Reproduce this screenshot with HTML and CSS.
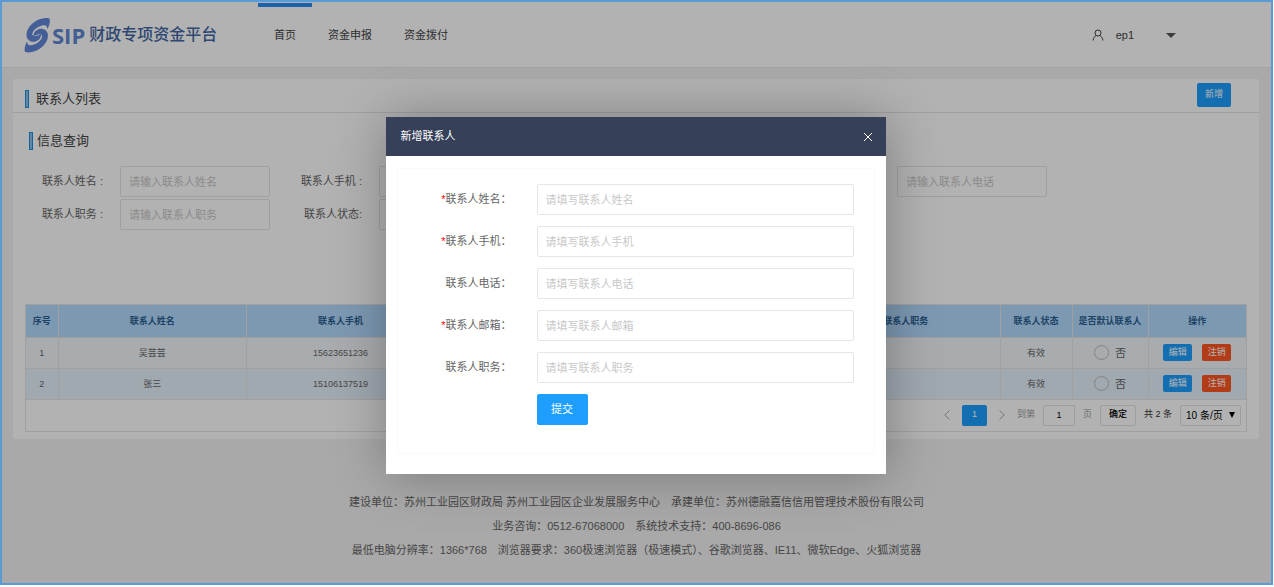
FILE: index.html
```html
<!DOCTYPE html>
<html lang="zh-CN">
<head>
<meta charset="utf-8">
<title>SIP 财政专项资金平台</title>
<link rel="stylesheet" href="styles.css">
</head>
<body>
<div class="frame">
  <header class="topbar">
    <a class="logo" href="#">
      <svg class="logo-mark" viewBox="0 0 28 36" aria-hidden="true">
        <path d="M25.500 1.500C20 0 13 2.500 8.500 6.500C4 10.500 2 15 2.700 19.500C3.300 23 6.500 25.300 10.500 24.800C14.500 24 17.500 20.500 17 17.500C15 17.500 13 19.500 10.500 19.300C8 19 8 16 9.500 14C12 10.500 17 8 20.500 8.200C22.800 8.500 23.500 10 23 12.500C25.500 9 26.500 4.500 25.500 1.500Z"/>
        <path transform="rotate(180 13.250 18.250)" d="M25.500 1.500C20 0 13 2.500 8.500 6.500C4 10.500 2 15 2.700 19.500C3.300 23 6.500 25.300 10.500 24.800C14.500 24 17.500 20.500 17 17.500C15 17.500 13 19.500 10.500 19.300C8 19 8 16 9.500 14C12 10.500 17 8 20.500 8.200C22.800 8.500 23.500 10 23 12.500C25.500 9 26.500 4.500 25.500 1.500Z"/>
        <path class="logo-cut" d="M9 18C9 14.500 13 11.300 18.500 10M17.500 18.500C17.500 22 13.500 25.200 8 26.500"/>
      </svg>
      <span class="logo-sip">SIP</span>
      <span class="logo-name">财政专项资金平台</span>
    </a>
    <nav class="nav">
      <a class="nav-item active" href="#">首页</a>
      <a class="nav-item" href="#">资金申报</a>
      <a class="nav-item" href="#">资金拨付</a>
    </nav>
    <button class="user" type="button">
      <svg class="user-icon" viewBox="0 0 12 12" aria-hidden="true"><circle cx="6" cy="4" r="3"/><path d="M1 11.500C1.300 8.500 3 7.200 4.300 6.600M7.700 6.600C9 7.200 10.700 8.500 11 11.500"/></svg>
      <span>ep1</span>
      <svg class="caret" viewBox="0 0 10 5" aria-hidden="true"><path d="M0 0H10L5 5Z"/></svg>
    </button>
  </header>

  <main class="card">
    <div class="card-head">
      <h1 class="title">联系人列表</h1>
      <button class="btn btn-add" type="button">新增</button>
    </div>
    <section class="query">
      <h2 class="title">信息查询</h2>
      <form class="query-grid">
        <label class="q-label" for="q1">联系人姓名 :</label><input class="field" id="q1" placeholder="请输入联系人姓名">
        <label class="q-label" for="q2">联系人手机 :</label><input class="field" id="q2" placeholder="请输入联系人手机">
        <label class="q-label" for="q3">联系人邮箱 :</label><input class="field" id="q3" placeholder="请输入联系人邮箱">
        <label class="q-label" for="q4">联系人电话 :</label><input class="field" id="q4" placeholder="请输入联系人电话">
        <label class="q-label" for="q5">联系人职务 :</label><input class="field" id="q5" placeholder="请输入联系人职务">
        <label class="q-label" for="q6">联系人状态:</label><select class="field" id="q6"><option>请选择</option></select>
      </form>
    </section>
    <section class="list">
      <table class="table">
        <colgroup><col class="c-no"><col><col><col><col><col><col class="c-state"><col class="c-default"><col class="c-ops"></colgroup>
        <thead>
          <tr><th>序号</th><th>联系人姓名</th><th>联系人手机</th><th>联系人电话</th><th>联系人邮箱</th><th>联系人职务</th><th>联系人状态</th><th>是否默认联系人</th><th>操作</th></tr>
        </thead>
        <tbody>
          <tr><td>1</td><td>吴芸芸</td><td>15623651236</td><td></td><td></td><td></td><td>有效</td>
            <td><label class="radio"><input type="radio" name="d1"><span>否</span></label></td>
            <td><div class="ops"><button class="btn btn-sm" type="button">编辑</button><button class="btn btn-sm btn-danger" type="button">注销</button></div></td></tr>
          <tr><td>2</td><td>张三</td><td>15106137519</td><td></td><td></td><td></td><td>有效</td>
            <td><label class="radio"><input type="radio" name="d2"><span>否</span></label></td>
            <td><div class="ops"><button class="btn btn-sm" type="button">编辑</button><button class="btn btn-sm btn-danger" type="button">注销</button></div></td></tr>
        </tbody>
      </table>
      <div class="pager">
        <button class="page-arrow" type="button" aria-label="上一页"><svg viewBox="0 0 6 10"><path d="M5.500 0.500L0.800 5L5.500 9.500"/></svg></button>
        <button class="btn page-current" type="button">1</button>
        <button class="page-arrow" type="button" aria-label="下一页"><svg viewBox="0 0 6 10"><path d="M0.500 0.500L5.200 5L0.500 9.500"/></svg></button>
        <label class="muted" for="goto">到第</label>
        <input class="page-box page-input" id="goto" value="1">
        <span class="muted">页</span>
        <button class="page-box page-ok" type="button">确定</button>
        <span>共 2 条</span>
        <div class="page-size">
          <select class="page-box" aria-label="每页条数"><option>10 条/页</option></select>
          <svg class="size-caret" viewBox="0 0 6 6" aria-hidden="true"><path d="M0 0H6L3 6Z"/></svg>
        </div>
      </div>
    </section>
  </main>

  <footer class="footer">
    <p>建设单位：苏州工业园区财政局 苏州工业园区企业发展服务中心　承建单位：苏州德融嘉信信用管理技术股份有限公司</p>
    <p>业务咨询：0512-67068000　系统技术支持：400-8696-086</p>
    <p>最低电脑分辨率：1366*768　浏览器要求：360极速浏览器（极速模式）、谷歌浏览器、IE11、微软Edge、火狐浏览器</p>
  </footer>

  <div class="overlay">
    <div class="modal" role="dialog" aria-labelledby="dlg-title">
      <div class="modal-head">
        <h2 id="dlg-title">新增联系人</h2>
        <button class="close" type="button" aria-label="关闭"><svg viewBox="0 0 10 10"><path d="M1 1L9 9M9 1L1 9"/></svg></button>
      </div>
      <form class="modal-form">
        <label class="m-label" for="m1"><span class="req">*</span>联系人姓名：</label><input class="field" id="m1" placeholder="请填写联系人姓名">
        <label class="m-label" for="m2"><span class="req">*</span>联系人手机：</label><input class="field" id="m2" placeholder="请填写联系人手机">
        <label class="m-label" for="m3">联系人电话：</label><input class="field" id="m3" placeholder="请填写联系人电话">
        <label class="m-label" for="m4"><span class="req">*</span>联系人邮箱：</label><input class="field" id="m4" placeholder="请填写联系人邮箱">
        <label class="m-label" for="m5">联系人职务：</label><input class="field" id="m5" placeholder="请填写联系人职务">
        <button class="btn submit" type="button">提交</button>
      </form>
    </div>
  </div>
</div>
</body>
</html>
```
FILE: styles.css
```css
*, *::before { box-sizing: border-box; }

body {
  margin: 0;
  background: #fff;
  color: #666;
  font: 11px/1.5 "Liberation Sans", "Noto Sans CJK SC", sans-serif;
}

h1, h2, p { margin: 0; font-weight: 400; }
a { color: inherit; text-decoration: none; }
button, input, select { margin: 0; font: inherit; color: inherit; }
button { padding: 0; border: 0; background: none; cursor: pointer; }

.frame {
  position: relative;
  min-height: calc(100vh - 2px);
  margin: 0 1px 2px 0;
  border: 2px solid #5b9bd5;
  background: #f2f2f2;
}

/* Top bar */
.topbar {
  display: flex;
  align-items: stretch;
  height: 66px;
  padding-left: 22px;
  padding-right: 95px;
  border-top: 1px solid #fff;
  border-bottom: 1px solid #e8e8e8;
  background: #fff;
}
.logo { display: flex; align-items: center; width: 234px; color: #4468a5; }
.logo-mark { width: 28px; height: 36px; fill: #6289d8; }
.logo-cut { fill: none; stroke: #fff; stroke-width: 1; }
.logo-sip { color: #6087d2; font: 700 22px/24px "Open Sans", sans-serif; }
.logo-name { margin-left: 4px; font-size: 16px; font-weight: 500; }

.nav { display: flex; color: #444; }
.nav-item { padding: 20px 16px 0; border-top: 4px solid transparent; }
.nav-item.active { border-color: #268df8; }

.user { display: flex; align-items: center; gap: 12px; margin-left: auto; color: #444; }
.user-icon { width: 12px; height: 12px; fill: none; stroke: #444; stroke-width: 1; }
.caret { width: 10px; height: 5px; margin-left: 20px; fill: #555; }

/* Card */
.card { margin: 11px 12px 0 11px; padding-bottom: 7px; border-radius: 2px; background: #fff; }
.card-head {
  display: flex;
  align-items: center;
  justify-content: space-between;
  height: 34px;
  padding: 0 28px 2px 12px;
  border-bottom: 1px solid #e6e6e6;
}
.title { display: flex; align-items: center; gap: 7px; color: #444; font-size: 13px; line-height: 20px; }
.title::before { content: ""; width: 4px; height: 18px; border: 1px solid #1e8fe0; background: #8cc4f0; }
.card-head .title { padding-top: 8px; }

.btn { border-radius: 2px; background: #1e9fff; color: #fff; }
.btn-add { width: 34px; height: 24px; font-size: 9px; }
.btn-sm { width: 29px; height: 17px; font-size: 9px; line-height: 17px; }
.btn-danger { background: #ff5722; }

.field {
  width: 100%;
  height: 31px;
  padding: 0 8px;
  border: 1px solid #e6e6e6;
  border-radius: 2px;
  background: #fff;
  outline: none;
}
.field::placeholder { color: #c8c8c8; opacity: 1; }

.query { padding: 18px 12px 0 16px; }
.query .title { gap: 4px; }
.query-grid {
  display: grid;
  grid-template-columns: 91px 150px repeat(3, 109px 150px);
  align-items: center;
  row-gap: 2px;
  padding-top: 15px;
}
.q-label { padding-right: 17px; text-align: right; white-space: nowrap; }

/* Table */
.list { margin: 74px 12px 0; border: 1px solid #e6e6e6; }
.table { width: 100%; border-collapse: collapse; table-layout: fixed; font-size: 9px; text-align: center; }
.c-no { width: 32px; }
.c-state { width: 72px; }
.c-default { width: 76px; }
.c-ops { width: 98px; }
.table th, .table td { height: 31px; padding: 0; border: 1px solid #e6e6e6; border-width: 0 1px 1px 0; line-height: 16px; }
.table th { height: 32px; background: #b3dcff; color: #2c5f92; font-weight: 700; white-space: nowrap; }
.table td { background: #f2f7fb; }
.table tr:nth-child(2) td { background: #e6f1fc; }
.table th:last-child, .table td:last-child { border-right: 0; }
.radio { display: flex; align-items: center; justify-content: center; gap: 6px; font-size: 11px; }
.radio input { width: 15px; height: 15px; border: 1px solid #bbb; border-radius: 50%; appearance: none; }
.ops { display: flex; justify-content: center; gap: 10px; }

/* Pager */
.pager {
  display: flex;
  align-items: center;
  justify-content: flex-end;
  gap: 8px;
  height: 31px;
  padding: 0 5px;
  color: #333;
  font-size: 9px;
}
.muted { color: #999; }
.page-arrow { display: flex; width: 14px; justify-content: center; }
.page-arrow svg { width: 6px; height: 10px; fill: none; stroke: #aaa; }
.page-current { width: 25px; height: 21px; }
.page-box { height: 21px; border: 1px solid #e2e2e2; border-radius: 2px; background: #fff; color: #000; }
.page-input { width: 32px; padding: 0; text-align: center; }
.page-ok { width: 36px; font-weight: 500; }
.page-size { position: relative; }
.page-size select { width: 61px; padding: 0 5px; font-size: 10px; appearance: none; }
.size-caret { position: absolute; top: 7px; right: 6px; width: 6px; height: 6px; pointer-events: none; }

.footer { padding: 51px 0 21px; line-height: 24px; text-align: center; }

/* Dialog */
.overlay {
  position: absolute;
  inset: 0;
  display: flex;
  align-items: center;
  justify-content: center;
  padding: 6px 2px 0 0;
  background: rgba(0, 0, 0, 0.3);
}
.modal { width: 500px; background: #fff; box-shadow: 1px 1px 50px rgba(0, 0, 0, 0.3); }
.modal-head {
  display: flex;
  align-items: center;
  justify-content: space-between;
  height: 39px;
  padding: 0 13px 0 15px;
  background: #364058;
  color: #fff;
}
.modal-head h2 { font-size: 11px; }
.close { display: flex; }
.close svg { width: 10px; height: 10px; fill: none; stroke: #fff; stroke-width: 1; }
.modal-form {
  display: grid;
  grid-template-columns: 114px 1fr;
  align-items: center;
  column-gap: 25px;
  row-gap: 11px;
  margin: 12px 11px 20px;
  padding: 15px 20px 28px 0;
  border: 1px solid #fafafa;
}
.m-label { text-align: right; }
.req { color: #f00; }
.submit { grid-column: 2; justify-self: start; width: 51px; height: 31px; }
```
